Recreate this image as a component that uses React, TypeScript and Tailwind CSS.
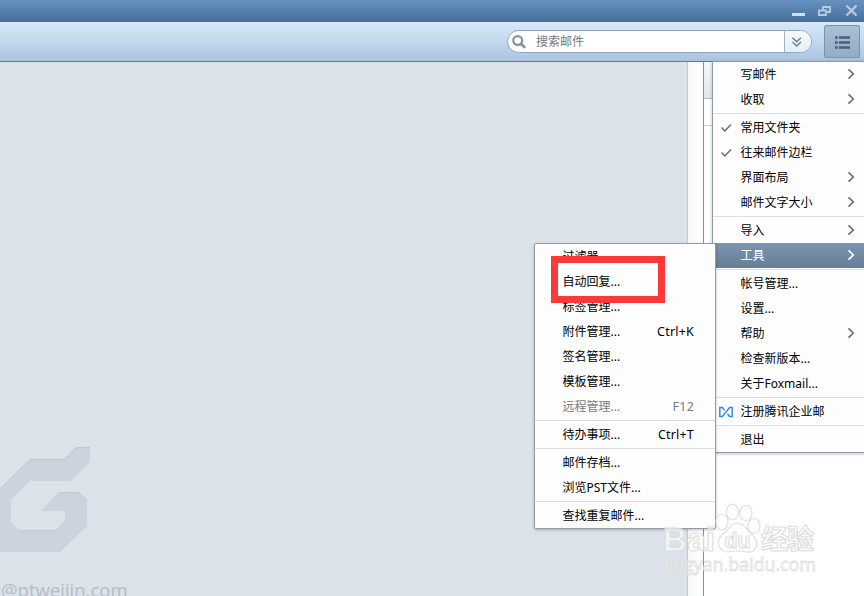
import { Fragment } from "react";
import clsx from "clsx";

type MenuItem = {
  label: string;
  shortcut?: string;
  checked?: boolean;
  arrow?: boolean;
  active?: boolean;
  disabled?: boolean;
  logo?: boolean;
};

const mainMenu: MenuItem[][] = [
  [{ label: "写邮件", arrow: true }, { label: "收取", arrow: true }],
  [
    { label: "常用文件夹", checked: true },
    { label: "往来邮件边栏", checked: true },
    { label: "界面布局", arrow: true },
    { label: "邮件文字大小", arrow: true },
  ],
  [{ label: "导入", arrow: true }, { label: "工具", arrow: true, active: true }],
  [
    { label: "帐号管理..." },
    { label: "设置..." },
    { label: "帮助", arrow: true },
    { label: "检查新版本..." },
    { label: "关于Foxmail..." },
  ],
  [{ label: "注册腾讯企业邮", logo: true }],
  [{ label: "退出" }],
];

const toolsMenu: MenuItem[][] = [
  [
    { label: "过滤器..." },
    { label: "自动回复..." },
    { label: "标签管理..." },
    { label: "附件管理...", shortcut: "Ctrl+K" },
    { label: "签名管理..." },
    { label: "模板管理..." },
    { label: "远程管理...", shortcut: "F12", disabled: true },
  ],
  [{ label: "待办事项...", shortcut: "Ctrl+T" }],
  [{ label: "邮件存档..." }, { label: "浏览PST文件..." }],
  [{ label: "查找重复邮件..." }],
];

function MenuRow({ item }: { item: MenuItem }) {
  return (
    <div
      className={clsx(
        "flex h-[25px] items-center pr-[9px] text-[12px] leading-[25px]",
        item.active ? "bg-linear-to-b from-[#7b96b2] to-[#667e97] text-white" : item.disabled ? "text-[#7b7b7b]" : "text-black",
      )}
    >
      <span className="flex w-[27.5px] shrink-0 items-center pl-[6px]">
        {item.checked && (
          <svg width="14" height="12" viewBox="0 0 14 12" fill="none" stroke="#666" strokeWidth="1.4"><path d="M2.6 5.6 5.8 8.9 12 2.6" /></svg>
        )}
        {item.logo && (
          <svg width="14" height="12" viewBox="0 0 14 12" fill="none" stroke="#3a8ae8" strokeWidth="1.5"><path d="M5.4 4.2 3.6 1.6H.8V10.4H3.4L10.6 1.6H13.2V10.4H10.4L8.6 7.8" /></svg>
        )}
      </span>
      <span className="whitespace-nowrap">{item.label}</span>
      {item.shortcut && <span className="ml-auto mr-[12px] text-[12.5px] tracking-[0.2px]">{item.shortcut}</span>}
      {item.arrow && (
        <svg width="8" height="12" viewBox="0 0 8 12" fill="none" stroke={item.active ? "#fff" : "#707070"} strokeWidth="1.7" className="mb-px ml-auto"><path d="M1.5 1.3 6.3 6 1.5 10.7" /></svg>
      )}
    </div>
  );
}

function Menu({ groups }: { groups: MenuItem[][] }) {
  return (
    <>
      {groups.map((group, i) => (
        <Fragment key={i}>
          {i > 0 && <div className="h-[3px] py-px"><div className="h-px bg-[#dedede]" /></div>}
          {group.map((item) => <MenuRow key={item.label} item={item} />)}
        </Fragment>
      ))}
    </>
  );
}

function TitleBar() {
  return (
    <div className="flex h-[22px] items-start justify-end bg-linear-to-b from-[#6692c0] to-[#466f9d]">
      <svg width="72" height="22" viewBox="0 0 72 22" fill="none" stroke="#b4cbe4" strokeWidth="1.8">
        <path d="M0 14.5H13" stroke="#d2e0ee" strokeWidth="3" />
        <path d="M31 10V7H38V12H35" />
        <path d="M27 10.5H34V15H27Z" />
        <path d="M54.5 5.5 64.5 15.5M64.5 5.5 54.5 15.5" strokeWidth="2.3" />
      </svg>
    </div>
  );
}

function Toolbar() {
  return (
    <div className="flex h-[40px] items-start justify-end border-b border-[#64788f] bg-linear-to-b from-[#d8eaf9] via-[#c2d8ee] to-[#abc3df] pr-1">
      <div className="mt-[8px] mr-[12px] flex h-[23px] w-[305px] overflow-hidden rounded-full border border-[#8da5bd] bg-white">
        <svg width="16" height="16" viewBox="0 0 16 16" fill="none" stroke="#8193a6" strokeWidth="2.2" className="mt-[3px] ml-[3px]"><circle cx="6.7" cy="6.5" r="4.4" /><path d="m9.8 9.7 4.4 4" strokeWidth="2.8" /></svg>
        <span className="ml-[9px] flex-1 text-[12px] leading-[22px] text-[#777]">搜索邮件</span>
        <div className="flex w-[27px] items-center border-l border-[#9bb3c9] bg-linear-to-b from-[#f7fafd] to-[#e6eef7] pl-[7px]">
          <svg width="10" height="10" viewBox="0 0 10 10" fill="none" stroke="#697b8f" strokeWidth="1.4"><path d="m.5.8 4.2 4 4.2-4M.5 5l4.2 4 4.2-4" /></svg>
        </div>
      </div>
      <div className="mt-[3px] flex h-[33px] w-[36px] items-center justify-center rounded-[2px] border border-[#7b93ad] bg-linear-to-b from-[#a9bfd6] to-[#96abc4]">
        <svg width="15" height="13" viewBox="0 0 15 13" fill="#46617b" className="mt-[2px] ml-px"><path d="M0 .2H2.7V2.8H0ZM4 .2H15V2.8H4ZM0 5.2H2.7V7.8H0ZM4 5.2H15V7.8H4ZM0 10.2H2.7V12.8H0ZM4 10.2H15V12.8H4Z" /></svg>
      </div>
    </div>
  );
}

function ReadingPane() {
  return (
    <div className="flex w-[687px] shrink-0 flex-col justify-end overflow-hidden bg-[#dbe2e9]">
      <svg width="91" height="107" viewBox="0 0 91 107" className="mb-[23px]">
        <path d="M0 42 30 12H64L76 0H90V15L71 34H30L11 53V75L19 83H56L65 75V64H41L59 45H78L87 53V79L60 105H0Z" fill="#ccd3de" />
        <path d="M0 42 30 12.5H64L76 0.5H90M59 45.5H78L87 53M19 83.5H56L65 75" fill="none" stroke="#c1c9d2" />
      </svg>
      <div className="h-[19px] overflow-visible pl-px font-['Open_Sans',sans-serif] text-[18.5px] leading-[25px] text-[#b3bdc8]">@ptweijin.com</div>
    </div>
  );
}

function Watermark() {
  return (
    <svg width="164" height="80" viewBox="0 0 164 80" fill="#fff" fillOpacity=".6" stroke="#dedede" strokeWidth="1.2" className="absolute top-[500px] left-[660px]">
      <g fontFamily="Liberation Sans, sans-serif" fontWeight="700">
        <text x="3" y="51" fontSize="34" textLength="52" lengthAdjust="spacingAndGlyphs">Bai</text>
        <g>
          <ellipse cx="62" cy="22" rx="6" ry="8" />
          <ellipse cx="72.5" cy="12" rx="6" ry="8" />
          <ellipse cx="86" cy="13" rx="6" ry="7.5" />
          <ellipse cx="94" cy="26" rx="6" ry="7.5" />
          <path d="M77 23C70 23 68 31 62 35 55 42 59 52 68 52Q77 50 87 52C96 53 100 44 94 37 88 32 85 23 77 23Z" />
        </g>
        <text x="64.5" y="48" fontSize="22" textLength="26" lengthAdjust="spacingAndGlyphs">du</text>
        <text x="101" y="49" fontSize="27" fontFamily="Noto Sans CJK SC, sans-serif" textLength="53">经验</text>
      </g>
      <text x="4" y="71" fontSize="18" fontFamily="Open Sans, sans-serif" strokeWidth=".8" textLength="152">jingyan.baidu.com</text>
    </svg>
  );
}

export default function App() {
  return (
    <div className="relative flex h-[596px] w-[864px] flex-col overflow-hidden bg-white font-['Noto_Sans','Noto_Sans_CJK_SC',sans-serif]">
      <TitleBar />
      <Toolbar />
      <div className="flex min-h-0 flex-1">
        <ReadingPane />
        <div className="w-[17px] shrink-0 border-r border-l border-r-[#8b9097] border-l-[#c4c9ce] bg-linear-to-r from-[#f6f8f7] to-white" />
        <div className="flex-1">
          <div className="h-[37px] border-b border-[#b4bac0] bg-linear-to-b from-[#f6f8fa] to-[#e2e6ea]" />
          <div className="h-[27px] border-b border-[#c9ced3]" />
        </div>
      </div>

      <div className="absolute top-[61px] left-[712px] w-[153px] border border-[#8f9ba8] bg-[#fdfdfd] shadow-[0_1px_3px_rgba(0,0,0,.25)]">
        <Menu groups={mainMenu} />
      </div>
      <div className="absolute top-[243px] left-[534px] w-[182px] rounded-[2px] border border-[#959ca5] bg-[#fdfdfd] shadow-[0_1px_3px_rgba(0,0,0,.25)]">
        <Menu groups={toolsMenu} />
      </div>
      <div className="absolute top-[256px] left-[551px] h-[47px] w-[114px] border-7 border-[#fc3838]" />
      <Watermark />
    </div>
  );
}
